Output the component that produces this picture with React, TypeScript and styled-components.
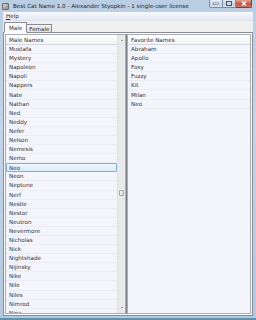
import React from "react";
import styled, { createGlobalStyle } from "styled-components";

const GlobalStyle = createGlobalStyle`
  html, body {
    margin: 0;
    padding: 0;
    width: 256px;
    height: 320px;
    overflow: hidden;
    background: #6f9fba;
  }
  * { box-sizing: border-box; }
`;

const Window = styled.div`
  width: 256px;
  height: 320px;
  display: flex;
  flex-direction: column;
  background: linear-gradient(to bottom, #b9cde3 0%, #c3d5ea 40%, #b2c9df 100%);
  font-family: "Segoe UI", "DejaVu Sans", "Noto Sans", sans-serif;
  color: #2e2e2e;
  border-bottom: 2px solid #5e93b0;
`;

const TitleBar = styled.div`
  height: 12px;
  display: flex;
  align-items: center;
  padding: 0 4px 0 2px;
  gap: 3px;
`;

const AppIcon = styled.div`
  width: 7px;
  height: 7px;
  border-radius: 1px;
  background: linear-gradient(135deg, #d8d8d8, #8a8a8a);
  border: 1px solid #6a6a6a;
`;

const Title = styled.div`
  flex: 1;
  font-size: 5.6px;
  color: #1e1e1e;
  white-space: nowrap;
  overflow: hidden;
  padding-left: 1px;
`;

const Controls = styled.div`
  display: flex;
  align-self: flex-start;
  height: 8px;
`;

const CtlButton = styled.div<{ $close?: boolean; $w: number }>`
  width: ${({ $w }) => $w}px;
  height: 8px;
  border: 1px solid ${({ $close }) => ($close ? "#8d3a33" : "#7c8ea3")};
  border-top: none;
  background: ${({ $close }) =>
    $close
      ? "linear-gradient(to bottom, #e8a191, #c9503d 55%, #d2775f)"
      : "linear-gradient(to bottom, #e4ecf5, #c2d2e4 55%, #d3e0ee)"};
  display: flex;
  align-items: center;
  justify-content: center;
  &:first-child { border-bottom-left-radius: 2px; }
  &:last-child { border-bottom-right-radius: 2px; }
  & + & { border-left: none; }
`;

const Client = styled.div`
  flex: 1;
  margin: 0 3px 2px 3px;
  background: #f0f0f0;
  display: flex;
  flex-direction: column;
  min-height: 0;
`;

const MenuBar = styled.div`
  height: 9px;
  display: flex;
  align-items: center;
  padding-left: 3px;
  font-size: 5.6px;
  background: linear-gradient(to bottom, #f6f8fc, #e4eaf2);
  border-bottom: 1px solid #dfe4ea;
`;

const Underlined = styled.span`
  text-decoration: underline;
`;

const TabStrip = styled.div`
  height: 11px;
  display: flex;
  align-items: flex-end;
  padding-left: 1px;
  position: relative;
  z-index: 1;
`;

const Tab = styled.div<{ $active?: boolean }>`
  height: ${({ $active }) => ($active ? 11 : 9)}px;
  padding: 0 ${({ $active }) => ($active ? 4 : 2)}px;
  margin-right: ${({ $active }) => ($active ? 0 : 0)}px;
  font-size: 5.6px;
  display: flex;
  align-items: center;
  border: 1px solid #898c95;
  border-bottom: ${({ $active }) => ($active ? "1px solid #fafafa" : "1px solid #898c95")};
  background: ${({ $active }) =>
    $active ? "#fafafa" : "linear-gradient(to bottom, #f2f2f2, #e0e0e0)"};
  margin-bottom: -1px;
  & + & { border-left: none; }
`;

const TabPanel = styled.div`
  flex: 1;
  min-height: 0;
  border: 1px solid #898c95;
  background: #fafafa;
  padding: 1px 1px 1px 1px;
  display: flex;
  gap: 0;
`;

const ListBox = styled.div<{ $width?: number }>`
  ${({ $width }) => ($width ? `width: ${$width}px;` : "flex: 1;")}
  min-width: 0;
  display: flex;
  border: 1px solid #aaaeb5;
  background: #f4f4fb;
  overflow: hidden;
`;

const ListColumn = styled.div`
  flex: 1;
  min-width: 0;
  display: flex;
  flex-direction: column;
  overflow: hidden;
`;

const Header = styled.div`
  height: 10px;
  flex-shrink: 0;
  display: flex;
  align-items: center;
  padding-left: 3px;
  font-size: 5.6px;
  color: #333;
  background: linear-gradient(to bottom, #ffffff, #f1f2f5);
  border-bottom: 1px solid #d5d5dd;
`;

const Row = styled.div<{ $selected?: boolean }>`
  height: 9.1px;
  flex-shrink: 0;
  display: flex;
  align-items: center;
  padding-left: 3px;
  font-size: 5.6px;
  color: #333;
  border-bottom: 1px solid #ececf5;
  ${({ $selected }) =>
    $selected &&
    `
    border: 1px solid #84acdd;
    border-radius: 1px;
    background: linear-gradient(to bottom, #eef7fd, #d8ecfa);
    padding-left: 2px;
  `}
`;

const ScrollBar = styled.div`
  width: 8px;
  flex-shrink: 0;
  background: #e9e9ec;
  border-left: 1px solid #e2e2e6;
  display: flex;
  flex-direction: column;
  align-items: center;
  padding: 3px 0 3px;
`;

const Track = styled.div`
  flex: 1;
  width: 100%;
  position: relative;
`;

const Thumb = styled.div`
  position: absolute;
  left: 1px;
  right: 1px;
  height: 6px;
  border: 1px solid #a9a9ad;
  border-radius: 1px;
  background: linear-gradient(to right, #f2f2f2, #dcdcdc);
`;

const Arrow = styled.div<{ $down?: boolean }>`
  width: 0;
  height: 0;
  border-left: 1.5px solid transparent;
  border-right: 1.5px solid transparent;
  ${({ $down }) =>
    $down ? "border-top: 1.5px solid #4a4a4a;" : "border-bottom: 1.5px solid #4a4a4a;"}
  margin: 2px 0;
`;

const Divider = styled.div`
  width: 1px;
  background: #7c7f86;
  flex-shrink: 0;
`;

const maleNames = [
  "Mustafa", "Mystery", "Napoleon", "Napoli", "Nappers", "Nate", "Nathan", "Ned",
  "Neddy", "Nefer", "Nelson", "Nemesis", "Nemo", "Neo", "Neon", "Neptune", "Nerf",
  "Nestle", "Nestor", "Neutron", "Nevermore", "Nicholas", "Nick", "Nightshade",
  "Nijinsky", "Nike", "Nile", "Niles", "Nimrod", "Nina",
];

const favorites = ["Abraham", "Apollo", "Foxy", "Fuzzy", "Kit", "Milan", "Neo"];

export default function App() {
  return (
    <>
      <GlobalStyle />
      <Window>
        <TitleBar>
          <AppIcon />
          <Title>Best Cat Name 1.0 - Alexander Styopkin - 1 single-user license</Title>
          <Controls>
            <CtlButton $w={14}>
              <svg width="6" height="3" viewBox="0 0 6 3"><rect x="0.5" y="1" width="5" height="1.5" fill="#fff" stroke="#555" strokeWidth="0.5" /></svg>
            </CtlButton>
            <CtlButton $w={13}>
              <svg width="6" height="5" viewBox="0 0 6 5"><rect x="0.5" y="0.5" width="5" height="4" fill="none" stroke="#555" strokeWidth="1" /></svg>
            </CtlButton>
            <CtlButton $w={16} $close>
              <svg width="6" height="5" viewBox="0 0 6 5"><path d="M1 0.5 L5 4.5 M5 0.5 L1 4.5" stroke="#fff" strokeWidth="1.4" /></svg>
            </CtlButton>
          </Controls>
        </TitleBar>
        <Client>
          <MenuBar>
            <span><Underlined>H</Underlined>elp</span>
          </MenuBar>
          <TabStrip>
            <Tab $active>Male</Tab>
            <Tab>Female</Tab>
          </TabStrip>
          <TabPanel>
            <ListBox>
              <ListColumn>
                <Header>Male Names</Header>
                {maleNames.map((n) => (
                  <Row key={n} $selected={n === "Neo"}>{n}</Row>
                ))}
              </ListColumn>
              <ScrollBar>
                <Arrow />
                <Track>
                  <Thumb style={{ top: "56%" }} />
                </Track>
                <Arrow $down />
              </ScrollBar>
            </ListBox>
            <Divider />
            <ListBox $width={124}>
              <ListColumn>
                <Header>Favorite Names</Header>
                {favorites.map((n) => (
                  <Row key={n}>{n}</Row>
                ))}
              </ListColumn>
            </ListBox>
          </TabPanel>
        </Client>
      </Window>
    </>
  );
}
